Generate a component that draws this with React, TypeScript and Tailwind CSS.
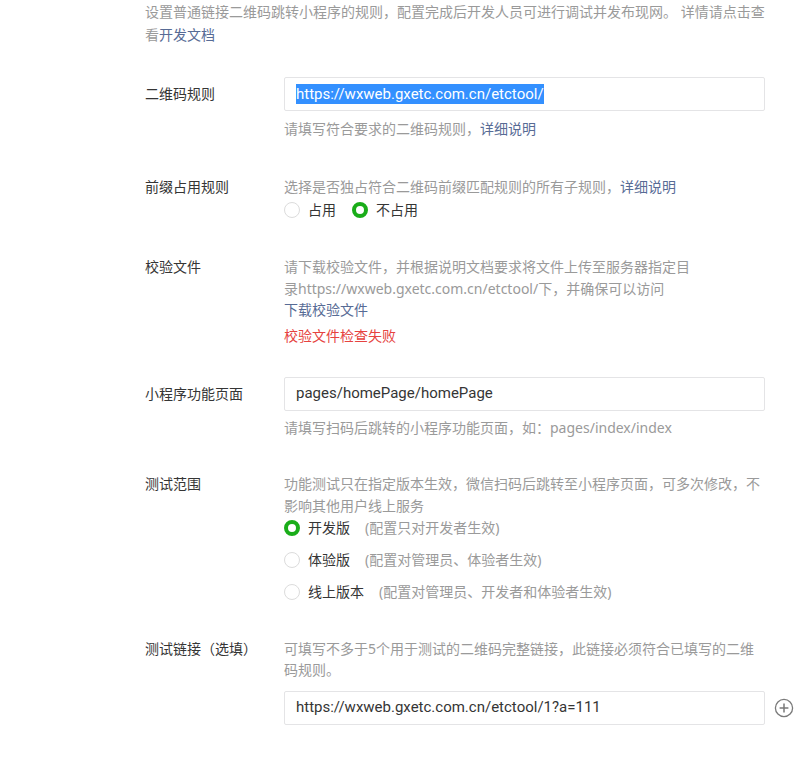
import React from "react";

const FONT = { fontFamily: '"Noto Sans", "Noto Sans CJK SC", sans-serif' };
const INPUT_FONT = { fontFamily: 'Roboto, "Noto Sans CJK SC", sans-serif' };

function Radio({ checked }: { checked?: boolean }) {
  return checked ? (
    <span className="inline-block w-[16px] h-[16px] rounded-full border-[4px] border-[#1aad19] bg-white shrink-0" />
  ) : (
    <span className="inline-block w-[16px] h-[16px] rounded-full border border-[#dcdcdc] bg-white shrink-0" />
  );
}

function Label({ children }: { children: React.ReactNode }) {
  return <div className="w-[139px] shrink-0 text-[14px] text-[#353535]">{children}</div>;
}

export default function App() {
  return (
    <div className="w-[797px] h-[759px] bg-white overflow-hidden" style={FONT}>
      <div className="pl-[145px] w-[765px]">
        <p className="text-[14px] leading-[23px] text-[#9a9a9a]">
          设置普通链接二维码跳转小程序的规则，配置完成后开发人员可进行调试并发布现网。 详情请点击查看<span className="text-[#576b95]">开发文档</span>
        </p>

        {/* 二维码规则 */}
        <div className="flex mt-[31px]">
          <Label>
            <div className="leading-[34px]">二维码规则</div>
          </Label>
          <div className="flex-1">
            <div
              className="h-[34px] border border-[#e4e4e6] rounded-[2px] pl-[11px] flex items-center text-[15px] text-[#353535]"
              style={INPUT_FONT}
            >
              <span className="bg-[#3390ff] text-white leading-[20px]">https://wxweb.gxetc.com.cn/etctool/</span>
            </div>
            <div className="mt-[7px] text-[14px] leading-[22px] text-[#9a9a9a]">
              请填写符合要求的二维码规则，<span className="text-[#576b95]">详细说明</span>
            </div>
          </div>
        </div>

        {/* 前缀占用规则 */}
        <div className="flex mt-[36px]">
          <Label>
            <div className="leading-[22px]">前缀占用规则</div>
          </Label>
          <div className="flex-1 text-[14px] leading-[22px]">
            <div className="text-[#9a9a9a]">
              选择是否独占符合二维码前缀匹配规则的所有子规则，<span className="text-[#576b95]">详细说明</span>
            </div>
            <div className="flex items-center h-[22px] mt-[1px] text-[#353535]">
              <Radio />
              <span className="ml-[8px]">占用</span>
              <span className="ml-[16px] flex"><Radio checked /></span>
              <span className="ml-[8px]">不占用</span>
            </div>
          </div>
        </div>

        {/* 校验文件 */}
        <div className="flex mt-[35px]">
          <Label>
            <div className="leading-[22px]">校验文件</div>
          </Label>
          <div className="flex-1 text-[14px] leading-[21.5px]">
            <div className="text-[#9a9a9a]">
              请下载校验文件，并根据说明文档要求将文件上传至服务器指定目
              <br />
              录https://wxweb.gxetc.com.cn/etctool/下，并确保可以访问
            </div>
            <div className="text-[#576b95]">下载校验文件</div>
            <div className="mt-[4px] leading-[22px] text-[#e64340]">校验文件检查失败</div>
          </div>
        </div>

        {/* 小程序功能页面 */}
        <div className="flex mt-[30px]">
          <Label>
            <div className="leading-[34px]">小程序功能页面</div>
          </Label>
          <div className="flex-1">
            <div
              className="h-[34px] border border-[#e4e4e6] rounded-[2px] pl-[11px] flex items-center text-[15px] text-[#353535]"
              style={INPUT_FONT}
            >
              pages/homePage/homePage
            </div>
            <div className="mt-[6px] text-[14px] leading-[22px] text-[#9a9a9a]">
              请填写扫码后跳转的小程序功能页面，如：pages/index/index
            </div>
          </div>
        </div>

        {/* 测试范围 */}
        <div className="flex mt-[34px]">
          <Label>
            <div className="leading-[22px]">测试范围</div>
          </Label>
          <div className="flex-1 text-[14px] leading-[22px]">
            <div className="text-[#9a9a9a]">
              功能测试只在指定版本生效，微信扫码后跳转至小程序页面，可多次修改，不影响其他用户线上服务
            </div>
            <div className="flex items-center h-[22px] text-[#353535]">
              <Radio checked />
              <span className="ml-[8px]">开发版</span>
              <span className="ml-[15px] text-[#9a9a9a]">(配置只对开发者生效)</span>
            </div>
            <div className="flex items-center h-[22px] mt-[10px] text-[#353535]">
              <Radio />
              <span className="ml-[8px]">体验版</span>
              <span className="ml-[15px] text-[#9a9a9a]">(配置对管理员、体验者生效)</span>
            </div>
            <div className="flex items-center h-[22px] mt-[10px] text-[#353535]">
              <Radio />
              <span className="ml-[8px]">线上版本</span>
              <span className="ml-[15px] text-[#9a9a9a]">(配置对管理员、开发者和体验者生效)</span>
            </div>
          </div>
        </div>

        {/* 测试链接 */}
        <div className="flex mt-[35px]">
          <Label>
            <div className="leading-[22px]">测试链接（选填）</div>
          </Label>
          <div className="flex-1">
            <div className="text-[14px] leading-[21.5px] text-[#9a9a9a]">
              可填写不多于5个用于测试的二维码完整链接，此链接必须符合已填写的二维码规则。
            </div>
            <div className="mt-[10px] relative">
              <div
                className="h-[34px] border border-[#e4e4e6] rounded-[2px] pl-[11px] flex items-center text-[15px] text-[#353535]"
                style={INPUT_FONT}
              >
                https://wxweb.gxetc.com.cn/etctool/1?a=111
              </div>
              <svg
                className="absolute left-[490px] top-[7px]"
                width="20"
                height="20"
                viewBox="0 0 20 20"
                fill="none"
                stroke="#7a7a7a"
                strokeWidth="1.3"
              >
                <circle cx="10" cy="10" r="8.6" />
                <path d="M10 5.6v8.8M5.6 10h8.8" strokeWidth="1.5" />
              </svg>
            </div>
          </div>
        </div>
      </div>
    </div>
  );
}
